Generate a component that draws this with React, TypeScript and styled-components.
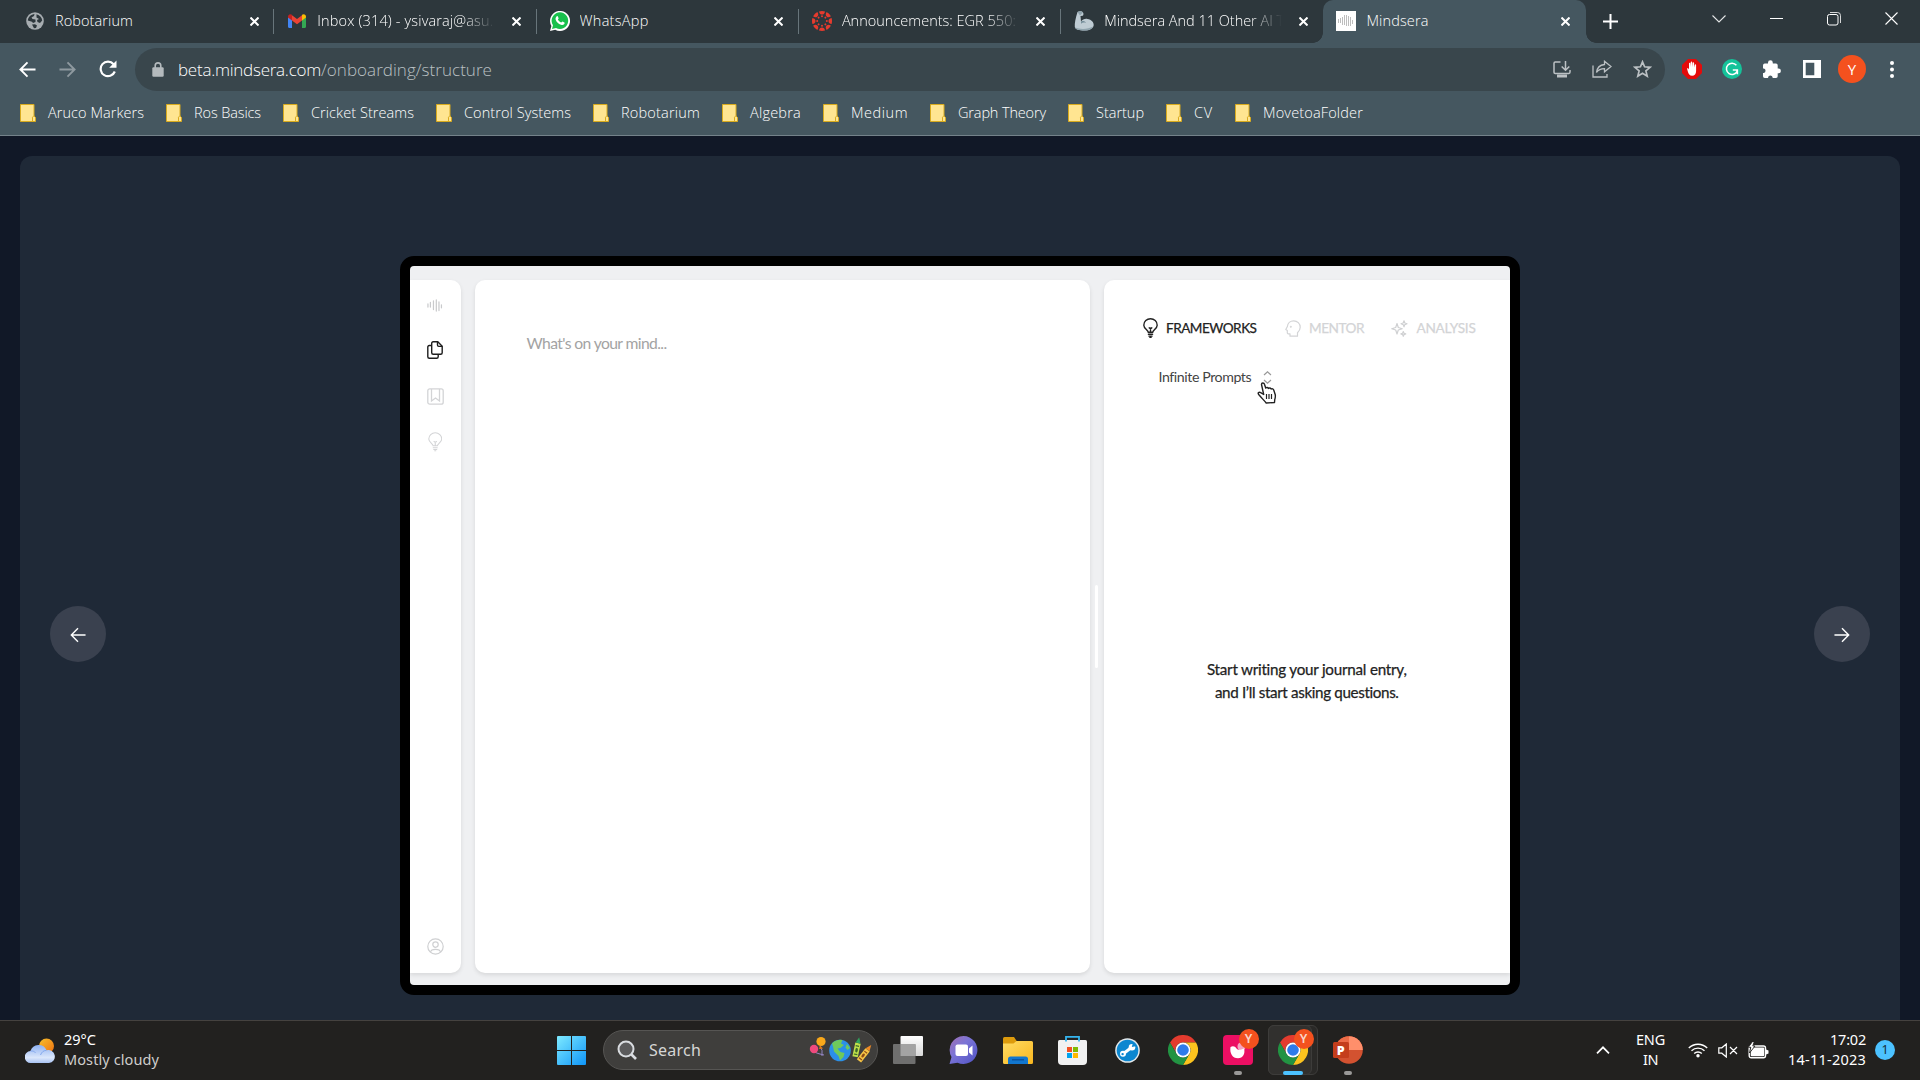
import React, { useLayoutEffect, useRef, useState } from "react";
import styled, { createGlobalStyle, css } from "styled-components";

const Global = createGlobalStyle`
  *, *::before, *::after { box-sizing: border-box; }
  html, body { margin: 0; padding: 0; background: #111827; }
  body { font-family: "Noto Sans", "Open Sans", sans-serif; overflow: hidden; }
  svg { display: block; flex: none; }
`;

const Screen = styled.div`
  width: 1920px;
  height: 1080px;
  display: flex;
  flex-direction: column;
  overflow: hidden;
  background: #111827;
`;

/* ---------- text that is tracked to an exact advance width ---------- */

const Run = styled.span`
  display: inline-block;
  white-space: pre;
  flex: none;
`;

function Tracked({ w, children }: { w: number; children: string }) {
  const ref = useRef<HTMLSpanElement>(null);
  const [spacing, setSpacing] = useState(0);
  useLayoutEffect(() => {
    if (ref.current) {
      const natural = ref.current.getBoundingClientRect().width;
      setSpacing((w - natural) / children.length);
    }
  }, [w, children]);
  return (
    <Run ref={ref} style={{ letterSpacing: `${spacing}px` }}>
      {children}
    </Run>
  );
}

/* ---------- tab strip ---------- */

const chromeFont = `"Open Sans", "Noto Sans", sans-serif`;

const TabStrip = styled.header`
  height: 43px;
  flex: none;
  display: flex;
  padding-left: 12px;
  background: #2d373c;
  font-family: ${chromeFont};
  font-weight: 300;
`;

const Tab = styled.div<{ $active?: boolean; $divider?: boolean }>`
  width: 262.3px;
  height: 43px;
  flex: none;
  display: flex;
  align-items: center;
  padding: 0 15px 1px 13px;
  color: #fff;
  font-size: 14.5px;
  position: relative;
  ${(p) =>
    p.$divider &&
    css`
      background: linear-gradient(#68757b, #68757b) right center / 1px 25px no-repeat;
    `}
  ${(p) =>
    p.$active &&
    css`
      background: #455760;
      border-radius: 10px 10px 0 0;
      &::before,
      &::after {
        content: "";
        position: absolute;
        bottom: 0;
        width: 10px;
        height: 10px;
      }
      &::before {
        left: -10px;
        background: radial-gradient(circle at 0 0, transparent 9.5px, #455760 10px);
      }
      &::after {
        right: -10px;
        background: radial-gradient(circle at 100% 0, transparent 9.5px, #455760 10px);
      }
    `}
`;

const Favicon = styled.div`
  width: 20px;
  height: 20px;
  flex: none;
  display: grid;
  place-items: center;
  margin-right: 10px;
`;

const TabTitle = styled.div<{ $fade?: boolean }>`
  width: 180px;
  flex: none;
  overflow: hidden;
  line-height: 24px;
  padding-bottom: 1px;
  ${(p) =>
    p.$fade &&
    css`
      mask-image: linear-gradient(90deg, #000 145px, transparent 178px);
    `}
`;

const TabClose = styled.div`
  margin-left: 14.5px;
`;

const NewTab = styled.div`
  width: 50px;
  display: grid;
  place-items: center;
  padding-bottom: 1px;
`;

const WindowButtons = styled.div`
  margin-left: auto;
  display: flex;
`;

const WindowButton = styled.div`
  width: 57.4px;
  height: 37px;
  display: grid;
  place-items: center;
`;

/* ---------- toolbar ---------- */

const Toolbar = styled.div`
  height: 53px;
  flex: none;
  display: flex;
  align-items: center;
  padding: 0 8px 0 7.5px;
  background: #455760;
  font-family: ${chromeFont};
  font-weight: 300;
`;

const ToolSlot = styled.div`
  width: 40px;
  height: 48px;
  flex: none;
  display: grid;
  place-items: center;
  padding-bottom: 1px;
`;

const Omnibox = styled.div`
  width: 1530px;
  height: 43px;
  margin-left: 7.5px;
  margin-right: 7px;
  flex: none;
  border-radius: 22px;
  background: #39464c;
  display: flex;
  align-items: center;
  padding-left: 17px;
  padding-right: 3px;
`;

const Url = styled.div`
  display: flex;
  margin-left: 14px;
  margin-right: auto;
  font-size: 17px;
  line-height: 30px;
  color: #fff;
`;

const UrlPath = styled.span`
  color: #b9c0c3;
`;

const Profile = styled.div`
  width: 28px;
  height: 28px;
  border-radius: 50%;
  background: #f4511e;
  color: #fff;
  font-size: 15px;
  font-weight: 400;
  line-height: 28px;
  text-align: center;
`;

/* ---------- bookmarks ---------- */

const Bookmarks = styled.nav`
  height: 40px;
  flex: none;
  display: flex;
  align-items: center;
  gap: 22px;
  padding: 0 0 6px 20px;
  background: #455760;
  border-bottom: 1px solid #74828a;
  font-family: ${chromeFont};
  font-weight: 300;
`;

const Bookmark = styled.div`
  display: flex;
  align-items: center;
  gap: 12px;
  color: #fff;
  font-size: 14.5px;
  line-height: 20px;
`;

/* ---------- page ---------- */

const Page = styled.main`
  height: 884px;
  flex: none;
  padding: 20px 20px 0;
  display: flex;
`;

const Stage = styled.section`
  flex: 1;
  height: 864px;
  border-radius: 12px 12px 0 0;
  background: #1f2937;
  display: flex;
  align-items: flex-start;
  justify-content: space-between;
  padding: 100px 30px 0;
`;

const RoundButton = styled.button`
  width: 56px;
  height: 56px;
  margin-top: 350px;
  border: 0;
  padding: 1px 0 0;
  border-radius: 50%;
  background: #3a414f;
  display: grid;
  place-items: center;
`;

const Frame = styled.div`
  width: 1120px;
  height: 739px;
  border: 10px solid #000;
  border-radius: 14px;
  background: #000;
`;

const Journal = styled.div`
  width: 1100px;
  height: 719px;
  border-radius: 4px;
  overflow: hidden;
  background: #eff0f2;
  display: flex;
  padding: 13.5px 0 12px;
  font-family: Lato, "Open Sans", sans-serif;
`;

const shadow = "0 2px 4px rgba(0, 0, 0, 0.1)";

const Rail = styled.aside`
  width: 51px;
  border-radius: 0 10px 10px 0;
  background: #fff;
  box-shadow: ${shadow};
  display: flex;
  flex-direction: column;
  align-items: center;
  padding: 13.5px 1px 13px 0;
`;

const RailItem = styled.div<{ $last?: boolean }>`
  height: ${(p) => (p.$last ? 24 : 45.8)}px;
  display: flex;
  align-items: flex-start;
  padding-top: 2px;
  ${(p) => p.$last && "margin-top: auto;"}
`;

const Editor = styled.section`
  width: 615.5px;
  margin-left: 13.5px;
  border-radius: 10px;
  background: #fff;
  box-shadow: ${shadow};
  padding: 50px 52px;
  font-size: 15.7px;
  line-height: 26px;
  color: #a3a3a3;
`;

const Splitter = styled.div`
  width: 13.5px;
  display: flex;
  justify-content: center;
  padding-top: 305px;
`;

const Grip = styled.div`
  width: 3px;
  height: 83px;
  border-radius: 2px;
  background: #fff;
`;

const Assistant = styled.section`
  flex: 1;
  border-radius: 10px 0 0 10px;
  background: #fff;
  box-shadow: ${shadow};
  display: flex;
  flex-direction: column;
  padding-top: 35.5px;
`;

const ModeTabs = styled.div`
  height: 26px;
  display: flex;
  align-items: center;
  padding-left: 39px;
`;

const Mode = styled.div<{ $active?: boolean; $gap: number }>`
  display: flex;
  align-items: center;
  gap: 8.5px;
  margin-right: ${(p) => p.$gap}px;
  font-size: 13.6px;
  line-height: 25px;
  color: ${(p) => (p.$active ? "#222" : "#d3d4d6")};
  -webkit-text-stroke: 0.25px currentColor;
`;

const Picker = styled.div`
  height: 26px;
  margin-top: 23px;
  padding-left: 55px;
  display: flex;
  align-items: center;
  gap: 12px;
  font-size: 14.2px;
  line-height: 26px;
  color: #444;
  position: relative;
`;

const Cursor = styled.div`
  position: absolute;
  left: 153px;
  top: 18px;
`;

const Message = styled.div`
  margin-top: 268px;
  text-align: center;
  font-size: 15.2px;
  line-height: 23px;
  color: #222;
  -webkit-text-stroke: 0.25px currentColor;
`;

/* ---------- taskbar ---------- */

const Taskbar = styled.footer`
  height: 60px;
  flex: none;
  border-top: 1px solid #45423f;
  background: #22211f;
  display: flex;
  align-items: center;
  color: #fff;
`;

const Weather = styled.div`
  width: 543.5px;
  display: flex;
  align-items: center;
  gap: 9px;
  padding-left: 25px;
`;

const Stack = styled.div<{ $align: string }>`
  display: flex;
  flex-direction: column;
  align-items: ${(p) => p.$align};
  font-size: 14.5px;
  line-height: 20px;
  padding-bottom: 3px;
`;

const Dim = styled.span`
  color: #cfcdcc;
`;

const AppSlot = styled.div<{ $active?: boolean }>`
  width: 55px;
  height: 59px;
  flex: none;
  display: flex;
  justify-content: center;
  align-items: center;
  padding-bottom: 1px;
  position: relative;
  ${(p) =>
    p.$active &&
    css`
      &::before,
      &::after {
        content: "";
        position: absolute;
        top: 4px;
        height: 50px;
        left: 3px;
        width: 44px;
        border-radius: 6px;
        background: #31302e;
        border: 1px solid #3d3c3a;
      }
      &::before {
        width: 50px;
        background: #2a2927;
      }
      & > * {
        z-index: 1;
      }
    `}
`;

const Indicator = styled.div<{ $on?: boolean }>`
  position: absolute;
  bottom: 5px;
  width: ${(p) => (p.$on ? 20 : 8)}px;
  height: 4px;
  border-radius: 2px;
  background: ${(p) => (p.$on ? "#4cc2ff" : "#9a9998")};
`;

const Badge = styled.div`
  position: absolute;
  left: 28.5px;
  top: 8px;
  width: 20px;
  height: 20px;
  border-radius: 50%;
  background: #f4511e;
  color: #fbd6c9;
  font-size: 12.5px;
  font-weight: 600;
  line-height: 20px;
  text-align: center;
`;

const SearchBox = styled.div`
  width: 275px;
  height: 40px;
  margin: 0 2.5px 1px 4px;
  flex: none;
  border-radius: 20px;
  border: 1px solid #565553;
  background: #3f3e3c;
  display: flex;
  align-items: center;
  padding: 0 5px 0 13px;
  font-size: 16px;
  color: #d6d6d5;
`;

const SearchLabel = styled.div`
  margin-left: 11.5px;
  margin-right: auto;
  line-height: 22px;
`;

const Tray = styled.div`
  margin-left: auto;
  display: flex;
  align-items: center;
  padding-right: 25px;
  padding-bottom: 1px;
`;

const TrayGap = styled.div<{ $w: number }>`
  width: ${(p) => p.$w}px;
`;

const Count = styled.div`
  width: 20px;
  height: 20px;
  border-radius: 50%;
  background: #4cc2ff;
  color: #16303d;
  font-size: 12.5px;
  line-height: 20px;
  text-align: center;
`;

/* ---------- icons ---------- */

const Cross = ({ size = 9, width = 2, color = "#fff" }) => (
  <svg width={size} height={size} viewBox={`0 0 ${size} ${size}`}>
    <path d={`M.5 .5L${size - 0.5} ${size - 0.5}M${size - 0.5} .5L.5 ${size - 0.5}`} stroke={color} strokeWidth={width} />
  </svg>
);

const GlobeFav = () => (
  <svg width="18" height="18" viewBox="0 0 18 18">
    <circle cx="9" cy="9" r="8.800" fill="#a7adb1" />
    <path d="M1.800 8.500C2.200 5 5 2.300 8.500 2L8 4 5.500 5.500 6.500 7 9.500 7.500 9.500 10 7 11 6 9.800zM10.500 2.200C14 3 16 5.800 16.200 8.500L14 11l-2.500-1L11 8l2-1-2.500-1.500zM6 12.500l3-.3 2 1.300-1 2.500-2 .2z" fill="#2d373c" />
  </svg>
);

const GmailFav = () => (
  <svg width="18" height="14" viewBox="0 0 18 14">
    <path d="M0 3v9.800c0 .7.500 1.200 1.200 1.200H4V5z" fill="#4285f4" />
    <path d="M18 3v9.800c0 .7-.5 1.200-1.200 1.200H14V5z" fill="#34a853" />
    <path d="M4 1.200L9 5l5-3.800V6.500L9 10.300 4 6.500z" fill="#ea4335" />
    <path d="M0 2.500C0 .4 2.300-.6 4 .8v5.700L0 3.500z" fill="#c5221f" />
    <path d="M18 2.500C18 .4 15.700-.6 14 .8v5.700l4-3z" fill="#fbbc04" />
  </svg>
);

const WhatsAppFav = () => (
  <svg width="20" height="20" viewBox="0 0 20 20">
    <path d="M0 20l1.400-5A10 10 0 1 1 5.200 18.700z" fill="#fff" />
    <path d="M2 18l1-3.700A8.300 8.300 0 1 1 6 17z" fill="#18c04c" />
    <path d="M6.600 5.400c.5-.5 1-.4 1.300.2l.7 1.600c.1.500-.7 1.100-.7 1.400.7 1.400 1.800 2.400 3.300 3 .5 0 .9-1.100 1.400-1l1.800.9c.4.300.2 1-.1 1.500-.8 1-2 1.200-3.300.8-2.700-.9-4.500-2.700-5.300-5-.4-1.300 0-2.600.9-3.400z" fill="#fff" />
  </svg>
);

const CanvasFav = () => (
  <svg width="20" height="20" viewBox="0 0 20 20">
    {[0, 45, 90, 135, 180, 225, 270, 315].map((a) => (
      <g key={a} transform={`rotate(${a} 10 10)`} fill="#e63b2e">
        <path d="M7 .4Q10-.4 13 .4Q12.500 3.500 10 3.500Q7.500 3.500 7 .4z" />
        <circle cx="10" cy="5.200" r="1" />
      </g>
    ))}
  </svg>
);

const ArmFav = () => (
  <svg width="20" height="20" viewBox="0 0 20 20">
    <path d="M3.500 1C5 0 8 0 9 1.500c.8 1.200.5 2.700-.3 3.300L6.500 5 7 10.500c1.500-2 4-3 6.500-2.500 4 .5 6.300 3.300 6.200 6-.2 3.500-4 5.500-9 5.500-5.500 0-9.500-1-9.900-3.500C.5 12.500 1.500 7 3.500 1z" fill="#bfccd4" />
    <path d="M3.500 1C5 0 8 0 9 1.500L6 4.500z" fill="#90a4ae" />
    <path d="M7 10.500c2-1 4-.5 5 1.500-2-.8-3.500-.5-5 .8z" fill="#78909c" />
    <path d="M1 16.500c5 2 13 2 18-1-1.500 3-4.500 4-8.500 4-5.500 0-9-1-9.500-3z" fill="#90a4ae" />
  </svg>
);

const WaveFav = () => (
  <svg width="20" height="20" viewBox="0 0 20 20" shapeRendering="crispEdges">
    <path fill="#fff" d="M0 0h20v20H0z" />
    <path d="M2.500 8v4M4.500 7v5M6.500 6v8M8.500 4v10M10.500 4v11M12.500 5v10M14.500 6v9M16.500 9v4" stroke="#bdbdbd" strokeWidth="1" />
  </svg>
);

const Folder = () => (
  <svg width="16" height="18" viewBox="0 0 16 18">
    <path d="M.5 .5h13.500v11.500l1.500 1.500v4H.5z" fill="#ffe591" stroke="#d9ab1e" />
    <path d="M12.500 17.500v-4.300l1.500-1.500" fill="none" stroke="#d9ab1e" />
  </svg>
);

const ChromeIcon = () => (
  <svg width="30" height="30" viewBox="0 0 48 48">
    <path d="M3.200 12A24 24 0 0 1 44.800 12H24A12 12 0 0 0 13.600 30z" fill="#e33b2e" />
    <path d="M44.800 12A24 24 0 0 1 24 48L34.400 30A12 12 0 0 0 24 12z" fill="#fcc31e" />
    <path d="M24 48A24 24 0 0 1 3.200 12L13.600 30A12 12 0 0 0 34.400 30z" fill="#229342" />
    <circle cx="24" cy="24" r="12" fill="#fff" />
    <circle cx="24" cy="24" r="9.300" fill="#2f7bea" />
  </svg>
);

const Bulb = ({ color, w = 15, sw = 1.1 }: { color: string; w?: number; sw?: number }) => (
  <svg width={w} height={(w * 20) / 15} viewBox="0 0 15 20" fill="none" stroke={color} strokeWidth={sw} strokeLinecap="round">
    <path d="M5.300 14.300C5.100 12 .8 10.500 .8 7.200a6.700 6.500 0 0 1 13.400 0c0 3.300-4.300 4.800-4.500 7.100z" />
    <path d="M7.500 14V10.500M6.200 9.800l1.300.9 1.300-.9M5.400 16.300h4.200M5.900 18.100h3.200M6.900 19.400h1.200" />
  </svg>
);

const BackArrow = ({ color, flip, size = 18, sw = 2 }: { color: string; flip?: boolean; size?: number; sw?: number }) => (
  <svg width={size} height={size} viewBox="0 0 18 18" fill="none" stroke={color} strokeWidth={sw} transform={flip ? "scale(-1 1)" : undefined}>
    <path d="M17.500 9H1.800M9 1.500L1.500 9 9 16.500" />
  </svg>
);

/* ---------- data ---------- */

const tabs = [
  { icon: <GlobeFav />, title: "Robotarium", w: 78 },
  { icon: <GmailFav />, title: "Inbox (314) - ysivaraj@asu.", w: 176, fade: true },
  { icon: <WhatsAppFav />, title: "WhatsApp", w: 69 },
  { icon: <CanvasFav />, title: "Announcements: EGR 550:", w: 174, fade: true },
  { icon: <ArmFav />, title: "Mindsera And 11 Other AI T", w: 180, fade: true },
  { icon: <WaveFav />, title: "Mindsera", w: 62 },
];

const bookmarks: [string, number][] = [
  ["Aruco Markers", 96],
  ["Ros Basics", 67],
  ["Cricket Streams", 103],
  ["Control Systems", 107],
  ["Robotarium", 79],
  ["Algebra", 51],
  ["Medium", 57],
  ["Graph Theory", 88],
  ["Startup", 48],
  ["CV", 19],
  ["MovetoaFolder", 100],
];

/* ---------- app ---------- */

export default function App() {
  return (
    <Screen>
      <Global />
      <TabStrip>
        {tabs.map((t, i) => (
          <Tab key={i} $divider={i < 4} $active={i === 5}>
            <Favicon>{t.icon}</Favicon>
            <TabTitle $fade={t.fade}>
              <Tracked w={t.w}>{t.title}</Tracked>
            </TabTitle>
            <TabClose>
              <Cross />
            </TabClose>
          </Tab>
        ))}
        <NewTab>
          <svg width="15" height="15" viewBox="0 0 15 15">
            <path d="M7.500 0v15M0 7.500h15" stroke="#fff" strokeWidth="2" />
          </svg>
        </NewTab>
        <WindowButtons>
          <WindowButton>
            <svg width="14" height="8" viewBox="0 0 14 8">
              <path d="M.5 .5L7 7 13.500 .5" fill="none" stroke="#e4e6e7" strokeWidth="1.100" />
            </svg>
          </WindowButton>
          <WindowButton>
            <svg width="13" height="1" viewBox="0 0 13 1">
              <path d="M0 0h13v1H0z" fill="#fff" />
            </svg>
          </WindowButton>
          <WindowButton>
            <svg width="14" height="14" viewBox="0 0 14 14" fill="none" stroke="#fff">
              <rect x=".5" y="2.500" width="10.500" height="10.500" rx="2" />
              <path d="M3 .5h7.500a3 3 0 0 1 3 3V11" strokeOpacity=".8" />
            </svg>
          </WindowButton>
          <WindowButton>
            <Cross size={13} width={1.1} />
          </WindowButton>
        </WindowButtons>
      </TabStrip>

      <Toolbar>
        <ToolSlot>
          <BackArrow color="#fff" size={17} />
        </ToolSlot>
        <ToolSlot>
          <BackArrow color="#8e999f" flip size={17} />
        </ToolSlot>
        <ToolSlot>
          <svg width="18" height="18" viewBox="0 0 18 18">
            <path d="M14.600 4.200A7.300 7.300 0 1 0 15.800 11.500" fill="none" stroke="#fff" strokeWidth="2.200" />
            <path d="M17.500 .5v7.300h-7.300z" fill="#fff" />
          </svg>
        </ToolSlot>
        <Omnibox>
          <svg width="12" height="15" viewBox="0 0 12 15">
            <path d="M3.200 6V3.700a2.800 2.800 0 0 1 5.600 0V6" fill="none" stroke="#b4babd" strokeWidth="1.600" />
            <rect x=".3" y="5.300" width="11.400" height="9.500" rx="1.200" fill="#b4babd" />
          </svg>
          <Url>
            <Tracked w={143}>beta.mindsera.com</Tracked>
            <UrlPath>
              <Tracked w={171}>/onboarding/structure</Tracked>
            </UrlPath>
          </Url>
          <ToolSlot>
            <svg width="18" height="17" viewBox="0 0 18 17" fill="none" stroke="#bcc1c4" strokeWidth="1.500">
              <path d="M7.500 1H2.200Q1 1 1 2.200v9Q1 12.400 2.200 12.400H16Q17 12.400 17 11V9" />
              <path d="M12.500 0v9M8.700 5.500l3.800 3.800 3.800-3.800" />
              <path d="M4 13.500h10v3H4z" fill="#bcc1c4" stroke="none" />
            </svg>
          </ToolSlot>
          <ToolSlot>
            <svg width="20" height="18" viewBox="0 0 20 18" fill="none" stroke="#bcc1c4" strokeWidth="1.300">
              <path d="M1 5.500V17h14v-3" />
              <path d="M12.500 1.200L19 6.500l-6.500 5.300V8.600C8.800 8.600 6.500 9.500 4.500 12.500 5 8 8 5 12.500 4.500z" />
            </svg>
          </ToolSlot>
          <ToolSlot>
            <svg width="19" height="18" viewBox="0 0 19 18" fill="none" stroke="#bcc1c4" strokeWidth="1.700">
              <path d="M9.500 1.800l2.100 5 5.500.5-4.200 3.600 1.300 5.300-4.700-2.900-4.700 2.900 1.300-5.300L1.900 7.300l5.500-.5z" />
            </svg>
          </ToolSlot>
        </Omnibox>
        <ToolSlot>
          <svg width="20" height="20" viewBox="0 0 20 20">
            <path d="M6 0h8l6 6v8l-6 6H6l-6-6V6z" fill="#e30b0b" />
            <path d="M5 9.500c.8-.8 1.500-.2 2 1V4.500c0-1 1.300-1 1.400 0l.3 3.500V3.300c0-1 1.400-1 1.500 0L10.400 8l.3-4c.1-1 1.400-.9 1.400.1l.1 4.400.6-2.800c.3-.9 1.400-.6 1.300.3V12c0 3-1.500 4.700-4 4.700S6.500 15 5.800 12.500z" fill="#fff" />
          </svg>
        </ToolSlot>
        <ToolSlot>
          <svg width="20" height="20" viewBox="0 0 20 20">
            <circle cx="10" cy="10" r="10" fill="#15c39a" />
            <path d="M14.400 6.300A5.600 5.600 0 1 0 15.200 12M10.800 11h4.600v4.200" fill="none" stroke="#fff" strokeWidth="1.500" />
          </svg>
        </ToolSlot>
        <ToolSlot>
          <svg width="18" height="18" viewBox="0 0 18 18">
            <path d="M0 5.500Q0 3.600 1.800 3.600H5V2.700a2.300 2.300 0 0 1 4.800 0v.9H13q1.700 0 1.700 1.700v3.200h.8a2.300 2.300 0 0 1 0 4.800h-.8v3q0 1.700-1.700 1.700H9.600v-.8a2.300 2.300 0 0 0-4.500 0v.8H1.800Q0 18 0 16.300V13h.9a2.300 2.300 0 0 0 0-4.400H0z" fill="#fff" />
          </svg>
        </ToolSlot>
        <ToolSlot>
          <svg width="18" height="18" viewBox="0 0 18 18">
            <path d="M0 0h18v18H0zM2.700 2.700v12.600h8.600V2.700z" fill="#fff" fillRule="evenodd" />
          </svg>
        </ToolSlot>
        <ToolSlot>
          <Profile>Y</Profile>
        </ToolSlot>
        <ToolSlot>
          <svg width="4" height="17" viewBox="0 0 4 17" fill="#fff">
            <circle cx="2" cy="2" r="2" />
            <circle cx="2" cy="8.500" r="2" />
            <circle cx="2" cy="15" r="2" />
          </svg>
        </ToolSlot>
      </Toolbar>

      <Bookmarks>
        {bookmarks.map(([name, w]) => (
          <Bookmark key={name}>
            <Folder />
            <Tracked w={w}>{name}</Tracked>
          </Bookmark>
        ))}
      </Bookmarks>

      <Page>
        <Stage>
          <RoundButton aria-label="Previous">
            <BackArrow color="#fff" size={16} sw={1.6} />
          </RoundButton>
          <Frame>
            <Journal>
              <Rail>
                <RailItem>
                  <svg width="16" height="22" viewBox="0 0 16 22" stroke="#c9cacc" strokeWidth="1.300" strokeLinecap="round">
                    <path d="M1 9v3M3.600 7.500v4.500M6.800 6v8.500M9.800 5v11M12.600 7v8.500M15.200 9.800v3" transform="scale(.95 1)" />
                  </svg>
                </RailItem>
                <RailItem>
                  <svg width="16" height="18" viewBox="0 0 16 18" fill="none" stroke="#1d1d1d" strokeWidth="1.400" strokeLinejoin="round">
                    <path d="M4.700 2.300Q4.700 .8 6.200 .8h4.600l4.400 4.400v6.500q0 1.500-1.500 1.500H6.200q-1.500 0-1.500-1.500z" />
                    <path d="M10.500 .8v3.300q0 1.300 1.300 1.300h3.400M4.700 4.500H2.300Q.8 4.500 .8 6v9.700q0 1.500 1.500 1.500h7.400q1.500 0 1.500-1.500v-2.500" />
                  </svg>
                </RailItem>
                <RailItem>
                  <svg width="17" height="18" viewBox="0 -1 17 18" fill="none" stroke="#d3d4d6" strokeWidth="1.300">
                    <rect x=".8" y=".8" width="15.400" height="15.400" rx="2" />
                    <path d="M4.500 1v12l4-3 4 3V1" />
                  </svg>
                </RailItem>
                <RailItem>
                  <Bulb color="#d3d4d6" w={14.5} />
                </RailItem>
                <RailItem $last>
                  <svg width="17" height="17" viewBox="0 0 17 17" fill="none" stroke="#cfd0d2" strokeWidth="1.200">
                    <circle cx="8.500" cy="8.500" r="7.700" />
                    <circle cx="8.500" cy="6.600" r="2.700" />
                    <path d="M3.500 14.200c.5-3.800 9.500-3.800 10 0" />
                  </svg>
                </RailItem>
              </Rail>
              <Editor>
                <Tracked w={140}>What's on your mind...</Tracked>
              </Editor>
              <Splitter>
                <Grip />
              </Splitter>
              <Assistant>
                <ModeTabs>
                  <Mode $active $gap={28}>
                    <Bulb color="#222" w={15} sw={1.4} />
                    <Tracked w={90.5}>FRAMEWORKS</Tracked>
                  </Mode>
                  <Mode $gap={27}>
                    <svg width="16" height="17" viewBox="0 0 16 17" fill="none" stroke="#d3d4d6" strokeWidth="1.200" strokeLinejoin="round">
                      <path d="M5 15.500V13.800H3.300Q2.300 13.800 2.300 12.500V10.500L.8 9.500 2.400 6.500C2.600 3 5.300 .8 8.700 .8c3.600 0 6.500 2.700 6.500 6.400 0 2.500-1.300 4.300-2.700 5.600v3.400H5z" />
                      <circle cx="5.800" cy="6.800" r=".4" />
                    </svg>
                    <Tracked w={55}>MENTOR</Tracked>
                  </Mode>
                  <Mode $gap={0}>
                    <svg width="17" height="17" viewBox="0 0 17 17" fill="none" stroke="#cfd0d2" strokeWidth="1.200" strokeLinejoin="round">
                      <path d="M6 3.500l1.300 4 4 1.200-4 1.300L6 14l-1.300-4-4-1.300 4-1.200zM13 .8l.8 2.200 2.200.8-2.200.8L13 6.800l-.8-2.200-2.200-.8 2.200-.8zM12.300 11.500l.7 1.700 1.700.7-1.700.7-.7 1.700-.7-1.700-1.700-.7 1.700-.7z" />
                    </svg>
                    <Tracked w={59}>ANALYSIS</Tracked>
                  </Mode>
                </ModeTabs>
                <Picker>
                  <Tracked w={92.5}>Infinite Prompts</Tracked>
                  <svg width="9" height="13" viewBox="0 0 9 13" fill="none" stroke="#999" strokeWidth="1.200">
                    <path d="M1 4l3.500-3.200L8 4M1 9l3.500 3.200L8 9" />
                  </svg>
                  <Cursor>
                    <svg width="20" height="22" viewBox="0 0 20 22">
                      <path d="M4.500 2.500C4.500 .5 7 .5 7.500 2.300L8.700 6c1-.9 2.300-.5 2.700.4 1-.8 2.200-.4 2.700.6 1-.6 2.300 0 2.700 1.200l1.400 4.300c.6 2.500-.2 3.700-.5 5.500l-.2 2.500-8.300.5c-1.500-2-4.200-4.500-7.500-8.500-1.300-1.700.3-2.800 2-1.900l3 1.900z" fill="#fff" stroke="#222" strokeWidth="1.400" strokeLinejoin="round" />
                      <path d="M9.500 12v5M12 12v5M14.500 12v5" stroke="#222" strokeWidth="1.200" />
                    </svg>
                  </Cursor>
                </Picker>
                <Message>
                  <Tracked w={200}>Start writing your journal entry,</Tracked>
                  <br />
                  <Tracked w={184}>and I’ll start asking questions.</Tracked>
                </Message>
              </Assistant>
            </Journal>
          </Frame>
          <RoundButton aria-label="Next">
            <BackArrow color="#fff" flip size={16} sw={1.6} />
          </RoundButton>
        </Stage>
      </Page>

      <Taskbar>
        <Weather>
          <svg width="30" height="25" viewBox="0 0 30 25">
            <defs>
              <linearGradient id="sun" x1="0" y1="0" x2="1" y2="1">
                <stop offset="0" stopColor="#f6c02c" />
                <stop offset="1" stopColor="#f0700f" />
              </linearGradient>
              <linearGradient id="cloud" x1="0" y1="0" x2="0" y2="1">
                <stop offset="0" stopColor="#8fb2f2" />
                <stop offset=".7" stopColor="#dbe7fb" />
                <stop offset="1" stopColor="#a9c3f3" />
              </linearGradient>
            </defs>
            <circle cx="21.500" cy="8" r="7.500" fill="url(#sun)" />
            <path d="M6 25a6 6 0 0 1-.5-12A8.500 8.500 0 0 1 21.500 12.300 6.500 6.500 0 1 1 24 25z" fill="url(#cloud)" />
            <path d="M5.500 13c2.500-.2 4 .5 5 1.800M15.500 17c1-3 3.500-4.700 6-4.700" stroke="#84a9ee" fill="none" />
          </svg>
          <Stack $align="flex-start">
            <Tracked w={32}>29°C</Tracked>
            <Dim>
              <Tracked w={95}>Mostly cloudy</Tracked>
            </Dim>
          </Stack>
        </Weather>
        <AppSlot>
          <svg width="29" height="29" viewBox="0 0 29 29">
            <defs>
              <linearGradient id="win" x1="0" y1="0" x2="1" y2="1">
                <stop offset="0" stopColor="#7eeaff" />
                <stop offset="1" stopColor="#0f95f8" />
              </linearGradient>
            </defs>
            <path d="M1 0h13v14H0V1Q0 0 1 0zM15 0h13q1 0 1 1v13H15zM0 15h14v14H1q-1 0-1-1zM15 15h14v13q0 1-1 1H15z" fill="url(#win)" />
          </svg>
        </AppSlot>
        <SearchBox>
          <svg width="21" height="21" viewBox="0 0 21 21" fill="none" stroke="#d9dce0" strokeWidth="2">
            <circle cx="9" cy="9" r="7.500" fill="#5b5b5c" />
            <path d="M14.500 14.500l4.500 4.500" strokeWidth="2.600" />
          </svg>
          <SearchLabel>
            <Tracked w={52}>Search</Tracked>
          </SearchLabel>
          <svg width="64" height="30" viewBox="0 0 64 30">
            <path d="M12 11q3 4 2 10M6 17q5 2 10 3" stroke="#9386c4" fill="none" />
            <circle cx="13" cy="6.500" r="4.600" fill="#f9a81a" />
            <path d="M12 10.500l3 3-4 .5z" fill="#e57a10" />
            <circle cx="6" cy="14" r="4.200" fill="#f04a7d" />
            <circle cx="32" cy="15.500" r="10.800" fill="#2b8fe8" />
            <path d="M24 8.500c3-3.500 8-4.300 10.500-3.300L33 8.500 36 10l-3.500 3-3 .5 3 3.500 4 1-1 4-3.500 3.500-1.500-4.500-4.500-4.500-1-5zM39 9l3 4-2.500 2-2-2.500z" fill="#6fc95b" />
            <g transform="rotate(12 49 14)">
              <path d="M46 8h5.500v14h-5.500z" fill="#bfe04a" />
              <path d="M46.300 8l2.400-6 2.500 6z" fill="#2fa35b" />
              <path d="M47 11h3.500M47 19.500h3.500" stroke="#3d6b2c" strokeWidth="1.200" />
              <ellipse cx="48.800" cy="15.200" rx="1.300" ry="2.300" fill="#3d6b2c" />
            </g>
            <g transform="rotate(38 56 19)">
              <path d="M53.500 13.500h5.500v14h-5.500z" fill="#f6c445" />
              <path d="M53.800 13.500l2.400-6 2.500 6z" fill="#f08a24" />
              <path d="M54.500 16.500h3.500M54.500 25h3.500" stroke="#8a4b16" strokeWidth="1.200" />
              <ellipse cx="56.200" cy="20.700" rx="1.300" ry="2.300" fill="#8a4b16" />
            </g>
          </svg>
        </SearchBox>
        <AppSlot>
          <svg width="30" height="28" viewBox="0 0 30 28">
            <defs>
              <linearGradient id="tv" x1="0" y1="0" x2="0" y2="1">
                <stop offset="0" stopColor="#fff" />
                <stop offset="1" stopColor="#d8d8d8" />
              </linearGradient>
            </defs>
            <rect x="7.500" width="22.500" height="20" rx="1" fill="url(#tv)" />
            <rect y="8" width="22.500" height="20" rx="1" fill="#6f6f6e" />
            <path d="M7.500 8h15v12h-15z" fill="#a3a3a3" />
          </svg>
        </AppSlot>
        <AppSlot>
          <svg width="30" height="28" viewBox="0 0 30 28">
            <defs>
              <linearGradient id="chat" x1="0" y1="0" x2="1" y2="1">
                <stop offset="0" stopColor="#a36fb0" />
                <stop offset=".4" stopColor="#7b74d6" />
                <stop offset="1" stopColor="#4f52c4" />
              </linearGradient>
            </defs>
            <path d="M15.500 0a14 14 0 1 1-6 26.700L1.500 28l2-7A14 14 0 0 1 15.500 0z" fill="url(#chat)" />
            <rect x="7.500" y="8.500" width="12.500" height="11.500" rx="2" fill="#fff" />
            <path d="M21 12.500l3.500-3v10l-3.500-3z" fill="#fff" />
          </svg>
        </AppSlot>
        <AppSlot>
          <svg width="30" height="27" viewBox="0 0 30 27">
            <defs>
              <linearGradient id="fold" x1="0" y1="0" x2="1" y2="1">
                <stop offset="0" stopColor="#ffdc64" />
                <stop offset="1" stopColor="#f9b71f" />
              </linearGradient>
            </defs>
            <path d="M0 1.500Q0 0 1.500 0H11l3 4.500V8H0z" fill="#dd9b0c" />
            <path d="M0 6.500h10.500l3-2.500H28.500Q30 4 30 5.500V25.500Q30 27 28.500 27H1.500Q0 27 0 25.500z" fill="url(#fold)" />
            <path d="M5 27v-5q0-2.500 2.500-2.500h15q2.500 0 2.500 2.500v5z" fill="#1277cf" />
            <path d="M9 22.800h12" stroke="#0a4d95" strokeWidth="1.200" />
          </svg>
        </AppSlot>
        <AppSlot>
          <svg width="29" height="29" viewBox="0 0 29 29">
            <path d="M0 5.500Q0 4 1.500 4h26Q29 4 29 5.500V25q0 4-4 4H4q-4 0-4-4z" fill="#f1f1f1" />
            <path d="M8 5.500V.9h13v4.600" fill="none" stroke="#35b5ef" strokeWidth="1.800" />
            <path d="M9 11h5v5H9z" fill="#f25022" />
            <path d="M15 11h5v5h-5z" fill="#7fba00" />
            <path d="M9 17h5v5H9z" fill="#00a4ef" />
            <path d="M15 17h5v5h-5z" fill="#ffb900" />
          </svg>
        </AppSlot>
        <AppSlot>
          <svg width="25" height="25" viewBox="0 0 25 25">
            <circle cx="12.500" cy="12.500" r="12.300" fill="#e3e8ea" />
            <circle cx="12.500" cy="12.500" r="10.800" fill="#0c87d0" />
            <path d="M8.500 15.500L16.500 9.500" stroke="#fff" strokeWidth="3" />
            <circle cx="8" cy="15.800" r="3" fill="#fff" />
            <circle cx="7.600" cy="16.100" r="1.200" fill="#0c87d0" />
            <circle cx="17" cy="9.300" r="3.300" fill="#fff" />
            <path d="M16.800 9l1.200-4.500 4 3.500z" fill="#0c87d0" />
          </svg>
        </AppSlot>
        <AppSlot>
          <ChromeIcon />
        </AppSlot>
        <AppSlot>
          <svg width="30" height="30" viewBox="0 0 30 30">
            <rect width="30" height="30" rx="4" fill="#ec0f63" />
            <circle cx="18.500" cy="11.500" r="4" fill="#f5a3c2" />
            <path d="M7.500 12c2.500-1.500 4.500-.8 6 1.500 1.500 2 4 1.500 7.500 0 1.500 5-1 9.800-6 9.800-5.500 0-8.500-5-7.500-11.300z" fill="#fff" />
          </svg>
          <Badge>Y</Badge>
          <Indicator />
        </AppSlot>
        <AppSlot $active>
          <ChromeIcon />
          <Badge>Y</Badge>
          <Indicator $on />
        </AppSlot>
        <AppSlot>
          <svg width="30" height="28" viewBox="0 0 30 28">
            <circle cx="16" cy="14" r="13.800" fill="#d35230" />
            <path d="M16 .2A13.800 13.800 0 0 1 29.800 14H16z" fill="#ff8f6b" />
            <path d="M16 .2A13.800 13.800 0 0 0 2.200 14H16z" fill="#ed6c47" />
            <rect x="0" y="6" width="16" height="16" rx="1.500" fill="#c43e1c" />
            <text x="7.700" y="18.500" fontFamily="Open Sans, sans-serif" fontWeight="800" fontSize="12.500" fill="#fff" textAnchor="middle">P</text>
          </svg>
          <Indicator />
        </AppSlot>
        <Tray>
          <svg width="14" height="8" viewBox="0 0 14 8">
            <path d="M1 7.300l6-6 6 6" fill="none" stroke="#fff" strokeWidth="1.700" />
          </svg>
          <TrayGap $w={26} />
          <Stack $align="center">
            <Tracked w={29}>ENG</Tracked>
            <Tracked w={15}>IN</Tracked>
          </Stack>
          <TrayGap $w={23} />
          <svg width="20" height="16" viewBox="0 0 20 16" fill="none" stroke="#fff" strokeWidth="1.400">
            <path d="M.8 6a13 13 0 0 1 18.400 0M3.500 8.800a9.200 9.200 0 0 1 13 0M6.200 11.500a5.400 5.400 0 0 1 7.600 0" />
            <circle cx="10" cy="13.800" r="1.700" fill="#fff" stroke="none" />
          </svg>
          <TrayGap $w={10} />
          <svg width="20" height="15" viewBox="0 0 20 15" fill="none" stroke="#fff" strokeWidth="1.200">
            <path d="M.8 4.800h3L8.300 1v13L3.800 10.200h-3zM12 4l7 7M19 4l-7 7" />
          </svg>
          <TrayGap $w={10} />
          <svg width="21" height="17" viewBox="0 0 21 17">
            <rect x="1.200" y="4" width="16.300" height="11.800" rx="2" fill="none" stroke="#fff" strokeWidth="1.400" />
            <rect x="2.700" y="5.500" width="13.500" height="8.700" rx="1" fill="#fff" />
            <path d="M18 7.500l2.500 1v3l-2.500 1z" fill="#fff" />
            <path d="M4.500 -.5L.3 5.300h2.500L1.500 11l5.500-7H4.800L6.300-.5z" fill="#fff" stroke="#22211f" strokeWidth=".9" />
          </svg>
          <TrayGap $w={19} />
          <Stack $align="flex-end">
            <Tracked w={36}>17:02</Tracked>
            <Tracked w={78}>14-11-2023</Tracked>
          </Stack>
          <TrayGap $w={9} />
          <Count>1</Count>
        </Tray>
      </Taskbar>
    </Screen>
  );
}
